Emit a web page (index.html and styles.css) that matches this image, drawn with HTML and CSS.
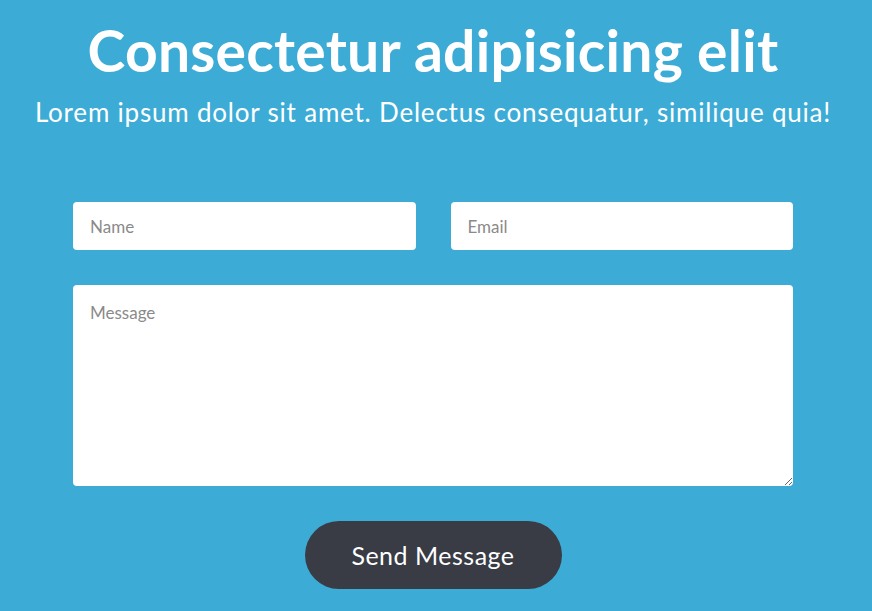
FILE: index.html
```html
<!DOCTYPE html>
<html lang="en">
<head>
<meta charset="utf-8">
<title>Contact</title>
<link rel="stylesheet" href="styles.css">
</head>
<body>
<main class="page">
  <header class="intro">
    <h1 class="title">Consectetur adipisicing elit</h1>
    <p class="subtitle">Lorem ipsum dolor sit amet. Delectus consequatur, similique quia!</p>
  </header>
  <form class="form">
    <div class="row">
      <input class="field" type="text" placeholder="Name">
      <input class="field" type="email" placeholder="Email">
    </div>
    <textarea class="field message" placeholder="Message"></textarea>
    <div class="actions">
      <button class="send" type="button">Send Message</button>
    </div>
  </form>
</main>
</body>
</html>
```
FILE: styles.css
```css
html, body {
  margin: 0;
  padding: 0;
  background: #3cacd6;
  height: 100%;
  overflow: hidden;
}
body {
  font-family: "Lato", "Open Sans", sans-serif;
  color: #fff;
}
.page {
  padding-right: 6px;
  display: flex;
  flex-direction: column;
  align-items: center;
}
.intro {
  text-align: center;
  padding-top: 18px;
}
.title {
  margin: 0;
  font-size: 57px;
  font-weight: 700;
  line-height: 64px;
  letter-spacing: 0.25px;
}
.subtitle {
  margin: 15px 0 0;
  font-size: 26px;
  font-weight: 400;
  line-height: 30px;
  letter-spacing: 0.8px;
  white-space: nowrap;
}
.form {
  width: 720px;
  margin-top: 75px;
  display: flex;
  flex-direction: column;
  gap: 35px;
}
.row {
  display: grid;
  grid-template-columns: 1fr 1fr;
  column-gap: 35px;
}
.field {
  box-sizing: border-box;
  border: 0;
  border-radius: 4px;
  background: #fff;
  height: 48px;
  padding: 0 17px;
  font-family: inherit;
  font-size: 17px;
  color: #333;
  outline: none;
}
.field::placeholder {
  color: #8a8a8a;
}
.message {
  height: 201px;
  padding: 17px 17px;
  resize: vertical;
  display: block;
}
.actions {
  display: flex;
  justify-content: center;
}
.send {
  width: 257px;
  height: 68px;
  border: 0;
  border-radius: 34px;
  background: #393b45;
  color: #fff;
  font-family: inherit;
  font-size: 25px;
  letter-spacing: 0.5px;
  cursor: pointer;
}
```
